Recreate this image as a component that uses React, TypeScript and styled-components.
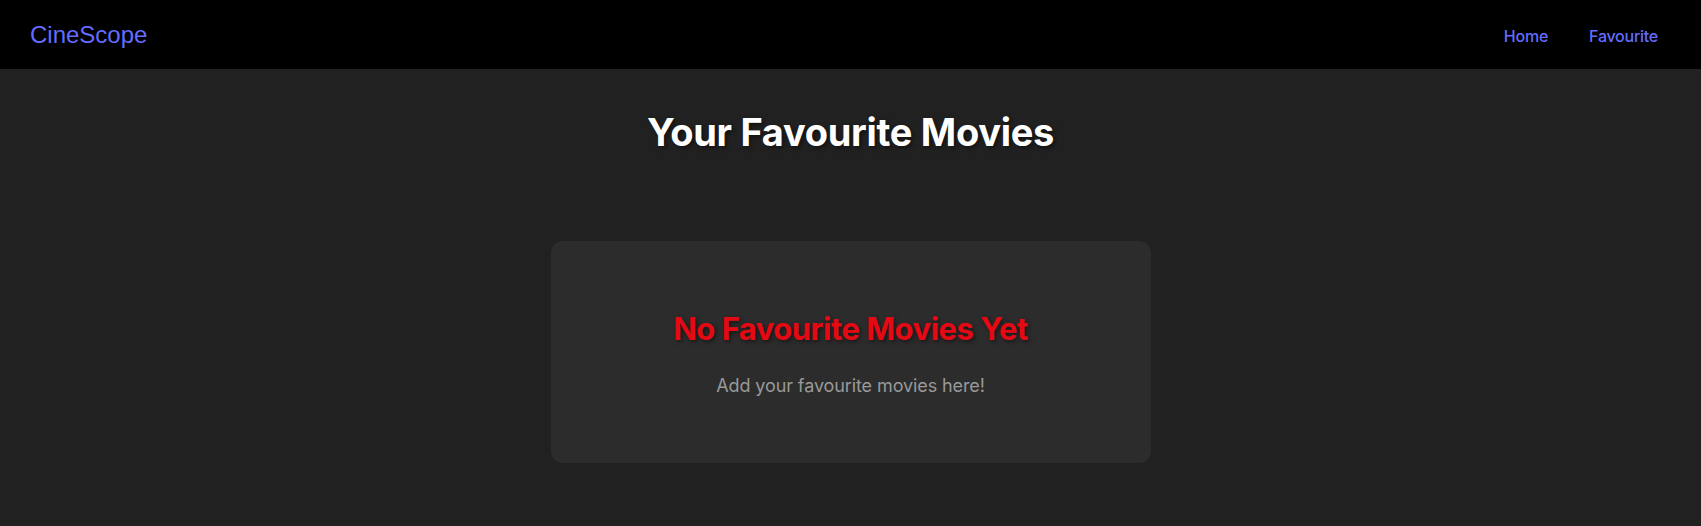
import React from "react";
import styled, { createGlobalStyle } from "styled-components";

const GlobalStyle = createGlobalStyle`
  html, body {
    margin: 0;
    padding: 0;
    background: #212121;
    font-family: Inter, "Noto Sans", sans-serif;
  }
  * { box-sizing: border-box; }
`;

const Page = styled.div`
  min-height: 526px;
  background: #212121;
  color: #fff;
`;

const NavBar = styled.nav`
  height: 69px;
  background: #000;
  display: flex;
  align-items: center;
  justify-content: space-between;
  padding: 0 43px 0 30px;
`;

const Logo = styled.a`
  font-family: "Liberation Sans", Arial, sans-serif;
  font-size: 24px;
  color: #646cff;
  text-decoration: none;
`;

const Links = styled.div`
  display: flex;
  align-items: center;
  gap: 41px;
`;

const NavLink = styled.a`
  font-family: Inter, sans-serif;
  font-size: 16px;
  font-weight: 500;
  letter-spacing: -0.25px;
  color: #646cff;
  text-decoration: none;
  padding-top: 2px;
`;

const Main = styled.main`
  display: flex;
  flex-direction: column;
  align-items: center;
  padding: 40px 20px 0;
`;

const Title = styled.h1`
  margin: 0 0 86px;
  font-size: 38px;
  font-weight: 700;
  letter-spacing: -0.3px;
  color: #fff;
  text-shadow: 2px 2px 4px rgba(0, 0, 0, 0.5);
`;

const EmptyCard = styled.div`
  width: 100%;
  max-width: 600px;
  background: #2c2c2c;
  border-radius: 12px;
  padding: 69px 32px 67px;
  text-align: center;
`;

const EmptyTitle = styled.h2`
  margin: 0 0 28px;
  font-size: 31px;
  font-weight: 700;
  letter-spacing: -0.5px;
  color: #e50914;
  text-shadow: 2px 2px 4px rgba(0, 0, 0, 0.5);
`;

const EmptyText = styled.p`
  margin: 0;
  font-size: 18px;
  letter-spacing: -0.1px;
  color: #999;
`;

export default function App() {
  return (
    <Page>
      <GlobalStyle />
      <NavBar>
        <Logo href="#">CineScope</Logo>
        <Links>
          <NavLink href="#">Home</NavLink>
          <NavLink href="#">Favourite</NavLink>
        </Links>
      </NavBar>
      <Main>
        <Title>Your Favourite Movies</Title>
        <EmptyCard>
          <EmptyTitle>No Favourite Movies Yet</EmptyTitle>
          <EmptyText>Add your favourite movies here!</EmptyText>
        </EmptyCard>
      </Main>
    </Page>
  );
}
